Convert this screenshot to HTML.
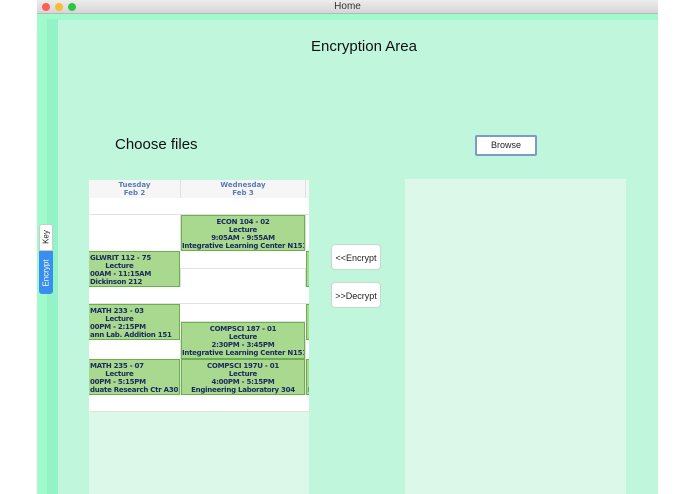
<!DOCTYPE html>
<html><head><style>
body{margin:0;width:695px;height:494px;background:#fff;position:relative;overflow:hidden;font-family:"Liberation Sans",sans-serif}
.a{position:absolute}
.g{position:absolute;background:#a9d88f;border:1px solid #6bb04c;box-sizing:border-box;color:#1b2a5c;font:bold 7px "DejaVu Sans",sans-serif;letter-spacing:-0.25px;text-align:center;line-height:8px;padding-top:2px;white-space:nowrap;overflow:hidden}
.w{position:absolute;background:#fff;border-bottom:1px solid #e2e2e2;box-sizing:border-box}
.btn{position:absolute;background:#fff;border:1px solid #c8d8cc;border-radius:4px;font-size:9px;color:#222;text-align:center;box-sizing:border-box}
</style></head><body>
<div class="a" style="left:37px;top:0;width:621px;height:14px;background:linear-gradient(#ececec,#d6d6d6);border-bottom:1px solid #b8b8b8;box-sizing:border-box;text-align:center;font-size:10px;line-height:14px;color:#333">Home</div>
<div class="a" style="left:42px;top:3px;width:8px;height:8px;border-radius:50%;background:#fc5f57"></div>
<div class="a" style="left:55px;top:3px;width:8px;height:8px;border-radius:50%;background:#fdbc2e"></div>
<div class="a" style="left:68px;top:3px;width:8px;height:8px;border-radius:50%;background:#29c840"></div>
<div class="a" style="left:37px;top:14px;width:621px;height:480px;background:#9ffbcc"></div>
<div class="a" style="left:47px;top:19px;width:11px;height:475px;background:#94f3c6"></div>
<div class="a" style="left:58px;top:20px;width:600px;height:474px;background:#c0f6dc"></div>
<div class="a" style="left:39px;top:224px;width:14px;height:27px;background:#fff;border-radius:3px 3px 0 0;border:1px solid #ccc;box-sizing:border-box"></div>
<div class="a" style="left:39px;top:251px;width:14px;height:43px;background:#3a8ef0;border-radius:0 0 3px 3px"></div>
<div class="a" style="left:46px;top:237px;transform:translate(-50%,-50%) rotate(-90deg);font-size:8px;color:#222">Key</div>
<div class="a" style="left:46px;top:273px;transform:translate(-50%,-50%) rotate(-90deg);font-size:8px;color:#fff">Encrypt</div>
<div class="a" style="left:58px;top:38px;width:612px;text-align:center;font-size:15px;color:#111">Encryption Area</div>
<div class="a" style="left:115px;top:136px;font-size:15px;color:#111">Choose files</div>
<div class="btn" style="left:475px;top:135px;width:62px;height:21px;border:2px solid #7d9bc6;border-radius:2px;line-height:17px">Browse</div>
<div class="btn" style="left:331px;top:244px;width:50px;height:26px;line-height:26px">&lt;&lt;Encrypt</div>
<div class="btn" style="left:331px;top:282px;width:50px;height:26px;line-height:26px">&gt;&gt;Decrypt</div>
<div class="a" style="left:405px;top:179px;width:221px;height:315px;background:#dcf8e9"></div>
<div class="a" style="left:89px;top:180px;width:220px;height:314px;background:#dcf8e9"></div>
<div class="a" style="left:89px;top:180px;width:220px;height:232px;background:#fff;overflow:hidden">
<div class="a" style="left:0;top:0;width:220px;height:18px;background:#f6f6f6;border-bottom:1px solid #e0e0e0;color:#5a7ab8;font:bold 7px 'DejaVu Sans',sans-serif;text-align:center;line-height:8px">
<div class="a" style="left:0;top:1px;width:91px">Tuesday<br>Feb 2</div>
<div class="a" style="left:92px;top:1px;width:124px">Wednesday<br>Feb 3</div></div>
<div class="a" style="left:91px;top:0;width:1px;height:232px;background:#e0e0e0"></div>
<div class="a" style="left:216px;top:0;width:1px;height:232px;background:#e0e0e0"></div>
<div class="w" style="left:0;top:18px;width:220px;height:17px"></div>
<div class="w" style="left:0;top:71px;width:220px;height:18px"></div>
<div class="w" style="left:0;top:107px;width:220px;height:17px"></div>
<div class="w" style="left:0;top:124px;width:220px;height:18px"></div>
<div class="w" style="left:0;top:142px;width:220px;height:18px"></div>
<div class="w" style="left:0;top:215px;width:220px;height:17px"></div>
<div class="g" style="left:-30px;top:71px;width:121px;height:36px;text-align:left;padding-left:30px">GLWRIT 112 - 75<br>&nbsp;&nbsp;&nbsp;&nbsp;&nbsp;&nbsp;&nbsp;Lecture<br>00AM - 11:15AM<br>Dickinson 212</div>
<div class="g" style="left:-30px;top:124px;width:121px;height:36px;text-align:left;padding-left:30px">MATH 233 - 03<br>&nbsp;&nbsp;&nbsp;&nbsp;&nbsp;&nbsp;&nbsp;Lecture<br>00PM - 2:15PM<br>ann Lab. Addition 151</div>
<div class="g" style="left:-30px;top:179px;width:121px;height:36px;text-align:left;padding-left:30px">MATH 235 - 07<br>&nbsp;&nbsp;&nbsp;&nbsp;&nbsp;&nbsp;&nbsp;Lecture<br>00PM - 5:15PM<br>duate Research Ctr A301</div>
<div class="g" style="left:92px;top:35px;width:124px;height:36px">ECON 104 - 02<br>Lecture<br>9:05AM - 9:55AM<br>Integrative Learning Center N151</div>
<div class="g" style="left:92px;top:142px;width:124px;height:37px">COMPSCI 187 - 01<br>Lecture<br>2:30PM - 3:45PM<br>Integrative Learning Center N151</div>
<div class="g" style="left:92px;top:179px;width:124px;height:36px">COMPSCI 197U - 01<br>Lecture<br>4:00PM - 5:15PM<br>Engineering Laboratory 304</div>
<div class="g" style="left:217px;top:71px;width:10px;height:36px"></div>
<div class="g" style="left:217px;top:124px;width:10px;height:36px"></div>
<div class="g" style="left:217px;top:179px;width:10px;height:36px;text-align:left;padding-left:1px"><br><br><br>L</div>
</div>
</body></html>
